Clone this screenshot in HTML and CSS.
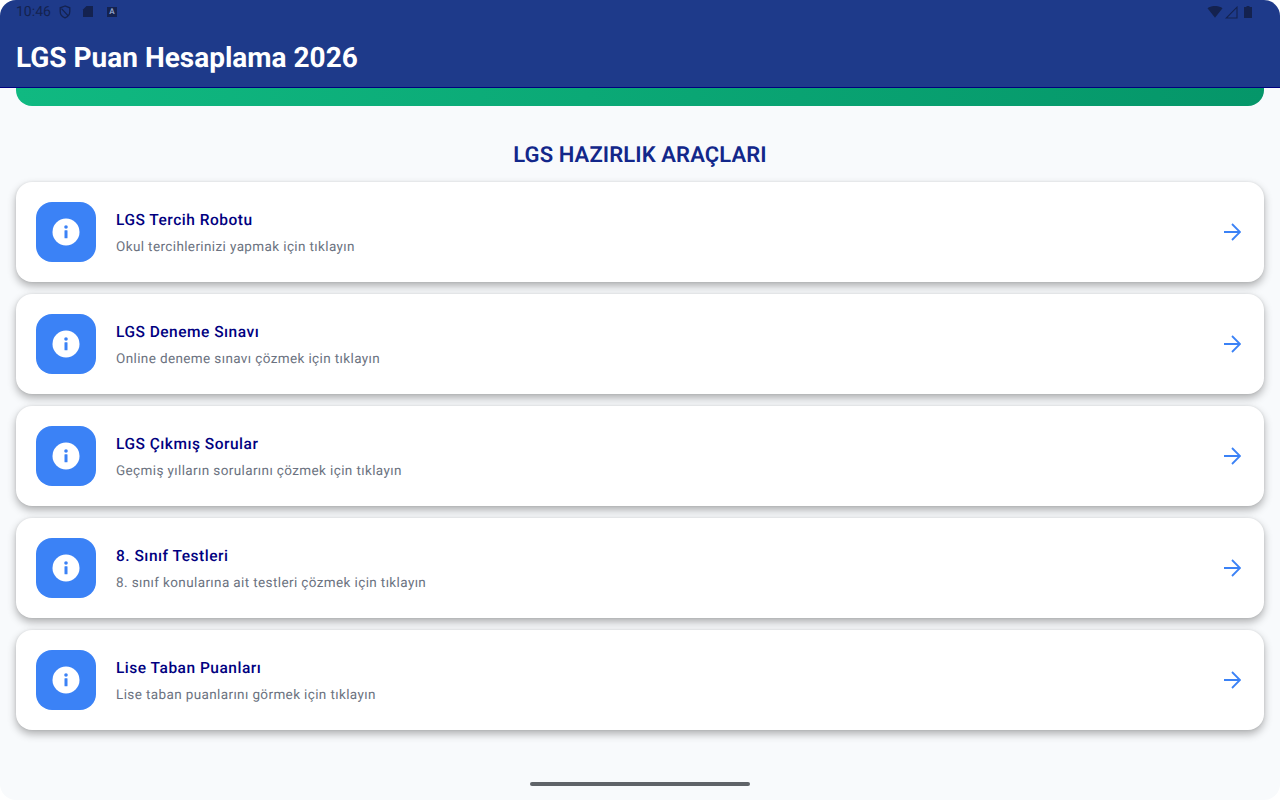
FILE: index.html
```html
<!DOCTYPE html>
<html lang="tr">
<head>
    <meta charset="UTF-8">
    <meta name="viewport" content="width=device-width, initial-scale=1.0">
    <title>LGS Puan Hesaplama 2026</title>
    <link rel="stylesheet" href="styles.css">
</head>
<body>
    <div class="screen">
        <header class="app-bar">
            <div class="status-bar">
                <div class="status-left">
                    <span class="clock">10:46</span>
                    <svg class="status-icon" width="14" height="14" viewBox="0 0 14 14"><path d="M7 1 2.200 2.800v3.800c0 3 2 5.300 4.800 6.200 2.800-.9 4.800-3.200 4.800-6.200V2.800z M3.500 3.600 10 10.600" fill="none" stroke="#14224f" stroke-width="1.300"/></svg>
                    <svg class="status-icon sd" width="12" height="14" viewBox="0 0 12 14"><path d="M4.500 1H11V12H1V4.500z" fill="#14224f"/></svg>
                    <span class="a-badge">A</span>
                </div>
                <div class="status-right">
                    <svg width="16" height="12" viewBox="0 0 16 12"><path d="M0.500 2.200C4.800-.8 11.200-.8 15.500 2.200L8 11.800z" fill="#14224f"/></svg>
                    <svg class="signal" width="13" height="13" viewBox="0 0 13 13"><path d="M12 1.200V12H1.200z" fill="none" stroke="#14224f" stroke-width="1.100"/></svg>
                    <svg width="8" height="12" viewBox="0 0 8 12"><path d="M2.500 0H5.500V1H8V12H0V1H2.500z" fill="#14224f"/></svg>
                </div>
            </div>
            <h1>LGS Puan Hesaplama 2026</h1>
        </header>
        <main>
            <div class="banner"></div>
            <h2>LGS HAZIRLIK ARAÇLARI</h2>
            <div class="tool-list">
                <a class="tool-card" href="#">
                    <span class="tool-icon"><svg width="28" height="28" viewBox="0 0 28 28"><circle cx="14" cy="14" r="13.500" fill="#fff"/><circle cx="14" cy="9" r="1.800" fill="#3b82f6"/><rect x="12.500" y="12.300" width="3" height="8" rx="0.500" fill="#3b82f6"/></svg></span>
                    <span class="tool-text">
                        <span class="tool-title">LGS Tercih Robotu</span>
                        <span class="tool-desc">Okul tercihlerinizi yapmak için tıklayın</span>
                    </span>
                    <svg class="arrow" width="20" height="20" viewBox="0 0 20 20"><path d="M3 10H18.500M11 2 19 10 11 18" fill="none" stroke="#3b82f6" stroke-width="1.800"/></svg>
                </a>
                <a class="tool-card" href="#">
                    <span class="tool-icon"><svg width="28" height="28" viewBox="0 0 28 28"><circle cx="14" cy="14" r="13.500" fill="#fff"/><circle cx="14" cy="9" r="1.800" fill="#3b82f6"/><rect x="12.500" y="12.300" width="3" height="8" rx="0.500" fill="#3b82f6"/></svg></span>
                    <span class="tool-text">
                        <span class="tool-title">LGS Deneme Sınavı</span>
                        <span class="tool-desc">Online deneme sınavı çözmek için tıklayın</span>
                    </span>
                    <svg class="arrow" width="20" height="20" viewBox="0 0 20 20"><path d="M3 10H18.500M11 2 19 10 11 18" fill="none" stroke="#3b82f6" stroke-width="1.800"/></svg>
                </a>
                <a class="tool-card" href="#">
                    <span class="tool-icon"><svg width="28" height="28" viewBox="0 0 28 28"><circle cx="14" cy="14" r="13.500" fill="#fff"/><circle cx="14" cy="9" r="1.800" fill="#3b82f6"/><rect x="12.500" y="12.300" width="3" height="8" rx="0.500" fill="#3b82f6"/></svg></span>
                    <span class="tool-text">
                        <span class="tool-title">LGS Çıkmış Sorular</span>
                        <span class="tool-desc">Geçmiş yılların sorularını çözmek için tıklayın</span>
                    </span>
                    <svg class="arrow" width="20" height="20" viewBox="0 0 20 20"><path d="M3 10H18.500M11 2 19 10 11 18" fill="none" stroke="#3b82f6" stroke-width="1.800"/></svg>
                </a>
                <a class="tool-card" href="#">
                    <span class="tool-icon"><svg width="28" height="28" viewBox="0 0 28 28"><circle cx="14" cy="14" r="13.500" fill="#fff"/><circle cx="14" cy="9" r="1.800" fill="#3b82f6"/><rect x="12.500" y="12.300" width="3" height="8" rx="0.500" fill="#3b82f6"/></svg></span>
                    <span class="tool-text">
                        <span class="tool-title">8. Sınıf Testleri</span>
                        <span class="tool-desc">8. sınıf konularına ait testleri çözmek için tıklayın</span>
                    </span>
                    <svg class="arrow" width="20" height="20" viewBox="0 0 20 20"><path d="M3 10H18.500M11 2 19 10 11 18" fill="none" stroke="#3b82f6" stroke-width="1.800"/></svg>
                </a>
                <a class="tool-card" href="#">
                    <span class="tool-icon"><svg width="28" height="28" viewBox="0 0 28 28"><circle cx="14" cy="14" r="13.500" fill="#fff"/><circle cx="14" cy="9" r="1.800" fill="#3b82f6"/><rect x="12.500" y="12.300" width="3" height="8" rx="0.500" fill="#3b82f6"/></svg></span>
                    <span class="tool-text">
                        <span class="tool-title">Lise Taban Puanları</span>
                        <span class="tool-desc">Lise taban puanlarını görmek için tıklayın</span>
                    </span>
                    <svg class="arrow" width="20" height="20" viewBox="0 0 20 20"><path d="M3 10H18.500M11 2 19 10 11 18" fill="none" stroke="#3b82f6" stroke-width="1.800"/></svg>
                </a>
            </div>
        </main>
        <div class="home-bar"><span></span></div>
    </div>
</body>
</html>
```

FILE: styles.css
```css
* {
    margin: 0;
    padding: 0;
    box-sizing: border-box;
    font-family: Roboto, "Liberation Sans", sans-serif;
    text-rendering: geometricPrecision;
}
html, body {
    height: 100%;
    overflow: hidden;
    background: #fff;
}
.screen {
    height: 800px;
    display: flex;
    flex-direction: column;
    background: #f8fafc;
    border-radius: 16px;
    overflow: hidden;
}
.app-bar {
    height: 88px;
    flex: none;
    background: #1e3a8a;
    border-bottom: 1px solid #000080;
    padding: 0 16px;
    position: relative;
    z-index: 1;
}
.status-bar {
    height: 24px;
    display: flex;
    justify-content: space-between;
    align-items: center;
    color: #14224f;
}
.status-left {
    display: flex;
    align-items: center;
}
.clock {
    font-size: 14px;
    margin-right: 7px;
}
.status-icon {
    margin-right: 10px;
}
.sd {
    margin-right: 13px;
}
.a-badge {
    width: 10px;
    height: 10px;
    background: #14224f;
    color: #8fa0c8;
    font-size: 8px;
    font-weight: 700;
    line-height: 10px;
    text-align: center;
}
.status-right {
    display: flex;
    align-items: center;
    margin-right: 12px;
}
.signal {
    margin: 0 6px 0 2px;
}
.app-bar h1 {
    color: #fff;
    font-size: 28px;
    font-weight: 700;
    line-height: 34px;
    margin-top: 17px;
}
main {
    flex: 1;
    padding: 0 16px;
}
.banner {
    height: 18px;
    background: linear-gradient(90deg, #10b981, #059669);
    border-radius: 0 0 16px 16px;
}
main h2 {
    color: #12278a;
    font-size: 22px;
    font-weight: 600;
    line-height: 28px;
    letter-spacing: 0.1px;
    text-align: center;
    margin-top: 36px;
    margin-bottom: 12px;
}
.tool-list {
    display: flex;
    flex-direction: column;
    gap: 12px;
}
.tool-card {
    height: 100px;
    background: #fff;
    border-radius: 16px;
    padding: 0 23px 0 20px;
    display: flex;
    align-items: center;
    text-decoration: none;
    box-shadow: 0 4px 9px rgba(0, 0, 0, 0.3), 0 0 3px rgba(0, 0, 0, 0.08);
}
.tool-icon {
    width: 60px;
    height: 60px;
    flex: none;
    background: #3b82f6;
    border-radius: 16px;
    display: flex;
    align-items: center;
    justify-content: center;
    margin-right: 20px;
}
.tool-text {
    flex: 1;
    display: flex;
    flex-direction: column;
    gap: 9px;
    padding-top: 3px;
}
.tool-title {
    color: #000080;
    font-size: 15.500px;
    font-weight: 500;
    line-height: 18px;
    letter-spacing: 0.5px;
}
.tool-desc {
    color: #6b7280;
    font-size: 13.500px;
    line-height: 18px;
    letter-spacing: 0.38px;
}
.home-bar {
    height: 18px;
    flex: none;
    display: flex;
    justify-content: center;
}
.home-bar span {
    width: 220px;
    height: 4px;
    background: #5f6368;
    border-radius: 2px;
}
```
